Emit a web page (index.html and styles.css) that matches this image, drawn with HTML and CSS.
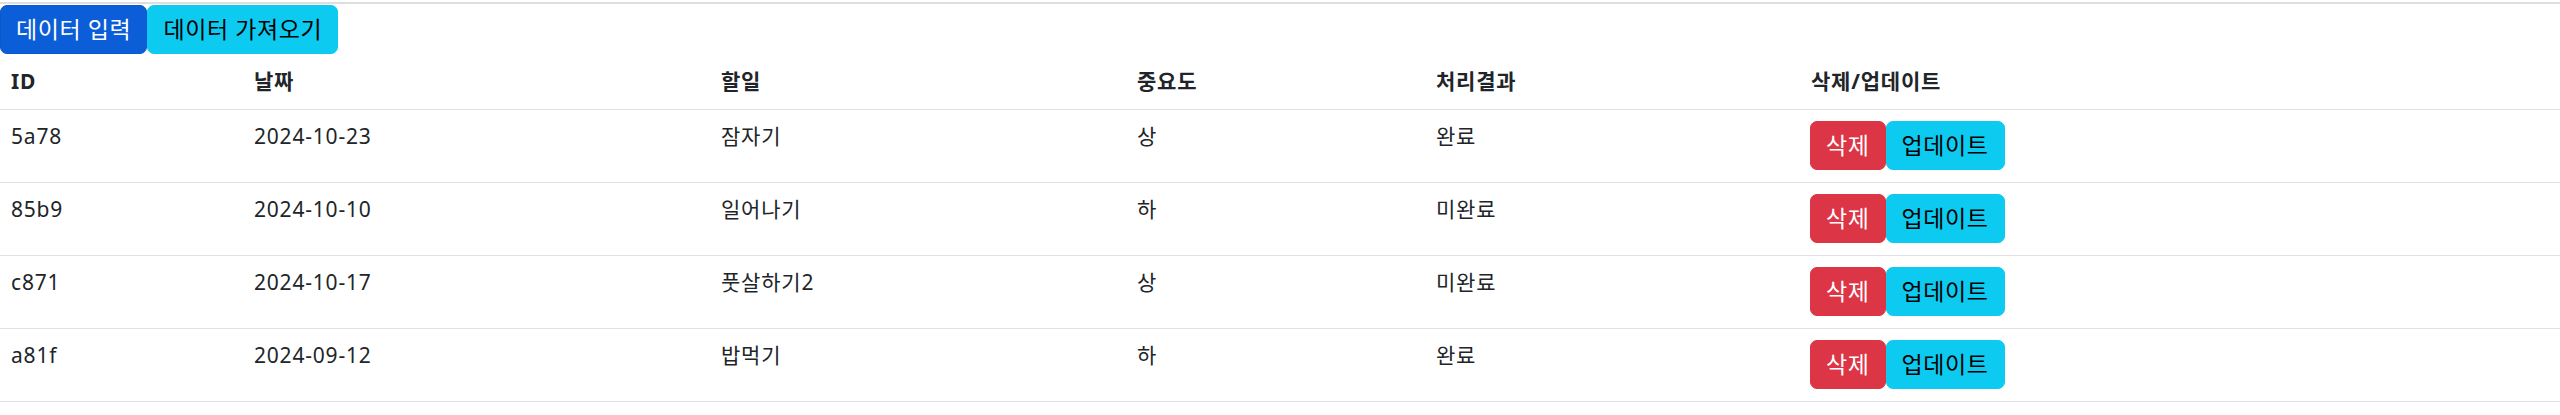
FILE: index.html
```
<!DOCTYPE html>
<html>

<head>
    <meta charset="utf-8">
    <link rel="stylesheet" href="styles.css">
</head>

<body>
    <div class="page">
        <div class="toolbar">
            <button class="btn btn-primary">데이터 입력</button>
            <button class="btn btn-info">데이터 가져오기</button>
        </div>
        <table class="table">
            <thead>
                <tr>
                    <th class="c-id">ID</th>
                    <th class="c-date">날짜</th>
                    <th class="c-todo">할일</th>
                    <th class="c-prio">중요도</th>
                    <th class="c-result">처리결과</th>
                    <th class="c-action">삭제/업데이트</th>
                </tr>
            </thead>
            <tbody>
                <tr>
                    <td>5a78</td>
                    <td>2024-10-23</td>
                    <td>잠자기</td>
                    <td>상</td>
                    <td>완료</td>
                    <td>
                        <div class="actions"><button class="btn btn-danger">삭제</button><button class="btn btn-info">업데이트</button></div>
                    </td>
                </tr>
                <tr>
                    <td>85b9</td>
                    <td>2024-10-10</td>
                    <td>일어나기</td>
                    <td>하</td>
                    <td>미완료</td>
                    <td>
                        <div class="actions"><button class="btn btn-danger">삭제</button><button class="btn btn-info">업데이트</button></div>
                    </td>
                </tr>
                <tr>
                    <td>c871</td>
                    <td>2024-10-17</td>
                    <td>풋살하기2</td>
                    <td>상</td>
                    <td>미완료</td>
                    <td>
                        <div class="actions"><button class="btn btn-danger">삭제</button><button class="btn btn-info">업데이트</button></div>
                    </td>
                </tr>
                <tr>
                    <td>a81f</td>
                    <td>2024-09-12</td>
                    <td>밥먹기</td>
                    <td>하</td>
                    <td>완료</td>
                    <td>
                        <div class="actions"><button class="btn btn-danger">삭제</button><button class="btn btn-info">업데이트</button></div>
                    </td>
                </tr>
            </tbody>
        </table>
    </div>
</body>

</html>
```

FILE: styles.css
```
body {
    margin: 0;
    font-family: "Noto Sans", "Noto Sans CJK KR", sans-serif;
    font-size: 21px;
    line-height: 31px;
    color: #212529;
    background: #fff;
}

.page {
    border-top: 2px solid #dedede;
    margin-top: 2px;
}

.toolbar {
    display: flex;
    padding-top: 1px;
}

.btn {
    font-family: inherit;
    font-size: 23px;
    line-height: 31px;
    padding: 8px 15px;
    border: 1px solid transparent;
    border-radius: 7px;
    cursor: pointer;
    letter-spacing: 0.6px;
}

.btn-primary {
    background: #0b5ed7;
    border-color: #0a58ca;
    color: #fff;
}

.btn-info {
    background: #0dcaf0;
    border-color: #0dcaf0;
    color: #000;
}

.btn-danger {
    background: #dc3545;
    border-color: #dc3545;
    color: #fff;
}

.table {
    width: 100%;
    border-collapse: collapse;
    table-layout: fixed;
    font-size: 21px;
    line-height: 31px;
    letter-spacing: 0.8px;
}

.table th,
.table td {
    box-sizing: border-box;
    text-align: left;
    vertical-align: top;
    padding: 11px 11px 12px;
    border-bottom: 1px solid #dee2e6;
}

.table th {
    font-weight: 700;
    padding-top: 12px;
}

.c-id { width: 243px; }
.c-date { width: 467px; }
.c-todo { width: 416px; }
.c-prio { width: 299px; }
.c-result { width: 375px; }

.table td:last-child {
    padding-left: 10px;
}

.actions {
    display: flex;
}
```
